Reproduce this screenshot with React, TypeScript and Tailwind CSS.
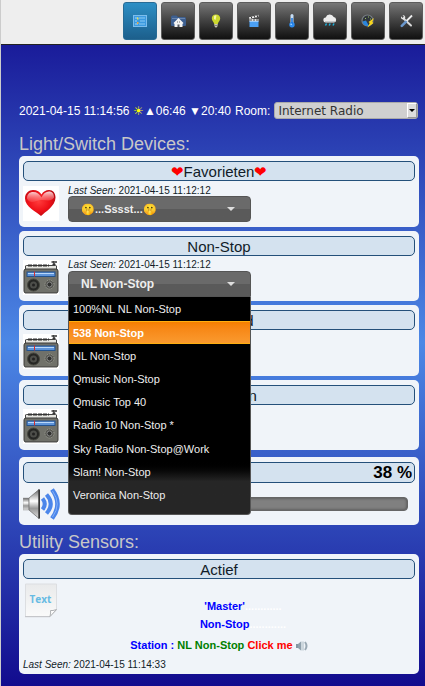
import React from 'react';

const stations = [
  '100%NL NL Non-Stop',
  '538 Non-Stop',
  'NL Non-Stop',
  'Qmusic Non-Stop',
  'Qmusic Top 40',
  'Radio 10 Non-Stop *',
  'Sky Radio Non-Stop@Work',
  'Slam! Non-Stop',
  'Veronica Non-Stop',
];

function DashboardIcon() {
  return (
    <svg width="14" height="12" viewBox="0 0 14 12">
      <rect x=".5" y=".5" width="13" height="11" fill="#3b9ae0" stroke="#7cbdec" />
      <path d="M2 3h3M2 6h2M2 9h3" stroke="#a5d6f5" />
      <path d="M6 3h6M7 6h5M6 9h6" stroke="#8ccaf2" />
      <path d="M4 2.500h1.500v2H4z" fill="#e8e05a" />
      <path d="M4 7h1.500v2H4z" fill="#e9a94a" />
    </svg>
  );
}

function HomeFolderIcon() {
  return (
    <svg width="15" height="13" viewBox="0 0 15 13">
      <path d="M0 2q0-1.500 1.500-1.500h4L7 2h6.500q1.500 0 1.500 1.500V10q0 1-1 1H1q-1 0-1-1z" fill="#3d5f90" />
      <path d="M1 3.500h13" stroke="#6985ad" />
      <path d="M7.500 3 2.500 8l1 1v3h8V9l1-1z" fill="#f4f4f4" />
      <path d="M6.500 12V9.500h2V12z" fill="#55585e" />
      <path d="M6 7h1M8 7h1" stroke="#777" />
    </svg>
  );
}

function BulbIcon() {
  return (
    <svg width="10" height="14" viewBox="0 0 10 14">
      <path d="M5 .5C2 .5.8 2.500.8 4.500c0 2.200 2 3 2.400 5.500h3.600c.4-2.500 2.400-3.300 2.400-5.500C9.200 2.500 8 .5 5 .5z" fill="#ccd82e" />
      <path d="M3 2.200q1-1 2.500-.8L4.500 6 3 5z" fill="#f5f8a5" />
      <path d="M3.300 10h3.400v2L5.500 13.500h-1L3.300 12z" fill="#c9c9b8" />
      <path d="M3.300 11.500h3.400" stroke="#66665e" strokeWidth=".7" />
    </svg>
  );
}

function SceneIcon() {
  return (
    <svg width="12" height="14" viewBox="0 0 12 14">
      <path d="M1 3.200 10.500.800v2L1.500 5z" fill="#eee" />
      <path d="m3 2.500 1 2M6 1.800l1 2M9 1l.6 2" stroke="#333" />
      <path d="M1.500 5h9v2h-9z" fill="#ddd" />
      <path d="M3 5.200v1.600M6 5.200v1.600M9 5.200v1.600" stroke="#333" />
      <path d="M1.500 7h9v6h-9z" fill="#4ba0f4" />
      <path d="M1.500 7.500h9" stroke="#9ccbfa" />
    </svg>
  );
}

function ThermometerIcon() {
  return (
    <svg width="8" height="14" viewBox="0 0 8 14">
      <path d="M4 1.500v8" stroke="#c8def5" strokeWidth="3" strokeLinecap="round" />
      <circle cx="4" cy="10.800" r="2.700" fill="#2e8df0" />
      <path d="M4 4v6" stroke="#1a74dd" strokeWidth="1.500" />
      <circle cx="3.200" cy="10.200" r=".8" fill="#b7dcff" />
    </svg>
  );
}

function RainIcon() {
  return (
    <svg width="14" height="14" viewBox="0 0 14 14">
      <path d="M3 8.500a2.500 2.500 0 0 1-.3-5A4.300 4.300 0 0 1 10.700 3 2.800 2.800 0 0 1 11 8.500z" fill="#ececec" />
      <path d="M2 7.500h10" stroke="#c2c5c8" />
      <path d="m3.500 9.500-1 2M7.200 9.500l-1 2M11 9.500l-1 2" stroke="#1db1dd" strokeWidth="1.500" />
    </svg>
  );
}

function EnergyIcon() {
  return (
    <svg width="14" height="14" viewBox="0 0 14 14">
      <circle cx="6.500" cy="6.500" r="5.500" fill="#30363c" stroke="#7b8085" strokeWidth="1.200" />
      <path d="M1.500 7.500 5 6.500l3 5.500q-5 1-6.500-4.500z" fill="#2b86dd" />
      <path d="M4 4.500h1M7 3h1M9 5h1" stroke="#9bbd60" />
      <path d="m13 4-5.500 4 1.200 1L6.500 13.500 12.500 9l-1.300-1z" fill="#f7d51d" />
    </svg>
  );
}

function ToolsIcon() {
  return (
    <svg width="13" height="14" viewBox="0 0 13 14">
      <path d="m3.500 4.500 7.500 7" stroke="#d9d9d9" strokeWidth="2" strokeLinecap="round" />
      <path d="M1 2.200q-.5 3.300 2.800 3.300 1.800-.5 1.500-2.500Q4.800 1 2.500 1l1.300 1.700L2.600 4z" fill="#e6e6e6" />
      <path d="M12 1.500 6 7.500" stroke="#eee" strokeWidth="1.800" />
      <path d="m5.800 7.800-4 4" stroke="#6a97cc" strokeWidth="2.600" strokeLinecap="round" />
    </svg>
  );
}

const navItems = [
  { label: 'Dashboard', icon: <DashboardIcon />, active: true },
  { label: 'Floorplan', icon: <HomeFolderIcon /> },
  { label: 'Switches', icon: <BulbIcon /> },
  { label: 'Scenes', icon: <SceneIcon /> },
  { label: 'Temperature', icon: <ThermometerIcon /> },
  { label: 'Weather', icon: <RainIcon /> },
  { label: 'Utility', icon: <EnergyIcon /> },
  { label: 'Setup', icon: <ToolsIcon /> },
];

function HeartPicture() {
  return (
    <svg width="36" height="35" viewBox="0 0 36 35" className="shrink-0 bg-white">
      <defs>
        <radialGradient id="heart" cx=".45" cy=".45" r=".6">
          <stop offset="0" stopColor="#ff3b3b" />
          <stop offset=".6" stopColor="#ee1018" />
          <stop offset="1" stopColor="#b80810" />
        </radialGradient>
        <linearGradient id="shine" x1="0" y1="0" x2="0" y2="1">
          <stop offset="0" stopColor="#fff" stopOpacity=".85" />
          <stop offset="1" stopColor="#ff8080" stopOpacity=".25" />
        </linearGradient>
      </defs>
      <path d="M18 30C14 26 2 21 2 12.500 2 7 6 4 10 4c4 0 7 2 8.500 4.500C20 5.500 23 4 26 4c4 0 6.500 3 6.500 7.500C32.500 20 22 26 18 30z" fill="url(#heart)" />
      <path d="M4 12.500C4 8 7 6 10 6c4 0 6.500 2 8.500 5.500C20 7.500 23 5.500 26 5.500c3 0 5 2 5 6-3 5-8 2-13 2.500S7 19 4 12.500z" fill="url(#shine)" />
    </svg>
  );
}

function RadioPicture() {
  return (
    <svg width="36" height="35" viewBox="0 0 36 35" className="shrink-0 bg-white">
      <path d="M28.500 2h2M32 2h2M31 1v6M29.500 4.500h3" stroke="#333" strokeWidth="1.500" />
      <path d="M2.500 10V6q0-.5 1-.5h29q1 0 1 .5v4" fill="#e4e4df" stroke="#444" />
      <path d="M5 5.500h21" stroke="#333" strokeWidth="2" strokeDasharray="4 1" />
      <rect x="1" y="9" width="34" height="24" rx="2" fill="#70716a" stroke="#3a3b38" />
      <path d="M2 33.500h32" stroke="#aaa" />
      <rect x="4" y="12" width="28" height="4.500" fill="#5e94da" stroke="#24538d" />
      <path d="M5 13.500h26" stroke="#b9d8fa" />
      <path d="M11.500 11.500v5" stroke="#d22b2b" />
      <circle cx="10.500" cy="25" r="6" fill="#252624" stroke="#45463f" />
      <circle cx="10.500" cy="25" r="3.500" fill="#4d4e4a" />
      <circle cx="10.500" cy="25" r="1.500" fill="#222" />
      <circle cx="26.500" cy="24.500" r="4.500" fill="#555650" stroke="#a5a69d" strokeDasharray="1 1" />
      <circle cx="26.500" cy="24.500" r="2.500" fill="#30312f" stroke="#888" />
    </svg>
  );
}

function SpeakerPicture() {
  return (
    <svg width="37" height="34" viewBox="0 0 37 34" className="shrink-0">
      <defs>
        <linearGradient id="cone" x1="0" y1="0" x2="0" y2="1">
          <stop offset="0" stopColor="#666" />
          <stop offset=".4" stopColor="#fff" />
          <stop offset=".65" stopColor="#999" />
          <stop offset="1" stopColor="#ddd" />
        </linearGradient>
      </defs>
      <path d="M0 11h6v12H0z" fill="url(#cone)" stroke="#999" strokeWidth=".5" />
      <path d="M6 11 16 2.500v29L6 23z" fill="url(#cone)" stroke="#666" strokeWidth=".7" />
      <path d="M16.200 2.500v29" stroke="#333" strokeWidth="1.600" />
      <g fill="none" stroke="#4b86ea">
        <path d="M19.500 11.500q4.500 5.500 0 11" strokeWidth="4" />
        <path d="M23.500 7.500q8.500 9.500 0 19" strokeWidth="4" />
        <path d="M29 2.500q11 14.500 0 29" strokeWidth="4.500" />
      </g>
      <path d="M29.500 4q9.500 13 0 26" fill="none" stroke="#83aff7" strokeWidth="1" />
    </svg>
  );
}

function TextPicture() {
  return (
    <svg width="36" height="35" viewBox="0 0 36 35" className="shrink-0">
      <defs>
        <linearGradient id="paper" x1="0" y1="0" x2="0" y2="1">
          <stop offset="0" stopColor="#e9eaeb" />
          <stop offset="1" stopColor="#fafafa" />
        </linearGradient>
      </defs>
      <path d="M2.500 1h31v26L27 33.500H2.500z" fill="url(#paper)" stroke="#dcdee1" />
      <path d="M2 33.700h25" stroke="#bfc1c4" />
      <path d="M33.500 26.500 27 33.500q1-4 .5-6 2 .5 6-1z" fill="#fff" stroke="#b0b2b5" />
      <text x="17.500" y="20" textAnchor="middle" fontSize="10" fontWeight="bold" fontFamily="Open Sans, sans-serif" fill="#67bbe3">Text</text>
    </svg>
  );
}

function LoudspeakerIcon() {
  return (
    <svg width="12" height="10" viewBox="0 0 12 10" className="inline-block align-middle">
      <path d="M0 3h2v4H0z" fill="#8396a3" />
      <path d="M2 3 5 .5v9L2 7z" fill="#8fa0ac" />
      <path d="M5 .5h3v9H5z" fill="#ccd6dd" />
      <path d="M9 1q3 4 0 8" fill="none" stroke="#9aa9b4" strokeWidth="2" />
    </svg>
  );
}

function Title({ children }: { children?: React.ReactNode }) {
  return (
    <h3 className="h-5 rounded-[5px] border border-[#24507a] bg-[#d4e2ef] text-center text-[15px] leading-5 text-[#111c28]">
      {children}
    </h3>
  );
}

function Card({ children, className = '' }: { children: React.ReactNode; className?: string }) {
  return <section className={'rounded-[5px] bg-[#f0f4f9] px-1 pt-[5px] ' + className}>{children}</section>;
}

function LastSeen({ time }: { time: string }) {
  return (
    <p className="text-[10px] leading-[10px] whitespace-nowrap text-[#111c28]">
      <i>Last Seen:</i> {time}
    </p>
  );
}

const selector =
  'block h-[26px] w-full appearance-none rounded-t-[4px] border border-[#555] bg-linear-to-b from-[#6a6a6a] from-50% to-[#5a5a5a] to-50% pl-3 text-left font-bold text-[#eee]';

function Caret() {
  return (
    <span className="pointer-events-none absolute top-[11px] right-4 border-x-4 border-t-4 border-x-transparent border-t-[#ddd]" />
  );
}

export default function App() {
  return (
    <div className="min-h-screen border-l border-[#ccc] bg-linear-to-b/srgb from-[#120b8e] via-[#4c88e6] to-[#120b8e] pb-3 font-['Liberation_Sans',Arial,sans-serif]">
      <nav className="flex h-[45px] justify-end gap-1 border-b border-[#222] bg-[#eee] pt-[2px] pr-[2px]">
        {navItems.map((n) => (
          <button
            key={n.label}
            aria-label={n.label}
            className={
              'flex h-[38px] w-[34px] items-center justify-center rounded-[3px] border ' +
              (n.active
                ? 'border-[#286b95] bg-linear-to-b from-[#2d8fc5] to-[#1c5f8c]'
                : 'border-[#5c5c5c] bg-linear-to-b from-[#777] to-[#111]')
            }
          >
            {n.icon}
          </button>
        ))}
      </nav>

      <main className="pt-14 pr-[6px] pl-[18px]">
        <div className="flex h-[19px] items-center justify-between gap-1 pr-px text-[12px] whitespace-nowrap text-white">
          <span>
            2021-04-15 11:14:56 <span className="text-[#ff0]">☀</span>▲06:46 ▼20:40
          </span>
          <label htmlFor="room">Room:</label>
          <div className="relative flex w-36 min-w-0">
            <select
              id="room"
              className="h-[17px] w-full appearance-none rounded-[3px] border border-[#aaa] bg-[#d0d0d0] pt-px pl-[3px] font-['DejaVu_Sans',sans-serif] text-[12px] leading-[15px] text-[#333]"
            >
              <option>Internet Radio</option>
            </select>
            <span className="pointer-events-none absolute inset-y-px right-px flex w-[10px] items-center justify-center border border-[#999] border-t-white border-l-white bg-[#ddd]">
              <span className="border-x-[3px] border-t-[3px] border-x-transparent border-t-black" />
            </span>
          </div>
        </div>

        <h2 className="mt-[13px] mb-px text-[18px] leading-[22px] text-[#c8c8c8]">Light/Switch Devices:</h2>

        <div className="flex flex-col gap-1">
          <Card className="h-[71px]">
            <Title>
              <span className="text-[#f00]">❤</span>Favorieten<span className="text-[#f00]">❤</span>
            </Title>
            <div className="flex gap-[9px] pt-[5px]">
              <HeartPicture />
              <div>
                <LastSeen time="2021-04-15 11:12:12" />
                <div className="relative w-[183px]">
                  <select aria-label="Favorieten" className={selector + ' rounded-b-[4px] text-[11px]'}>
                    <option>🤫...Sssst...🤫</option>
                  </select>
                  <Caret />
                </div>
              </div>
            </div>
          </Card>

          <Card className="h-[70px]">
            <Title>Non-Stop</Title>
            <div className="flex gap-[9px] pt-[4px]">
              <RadioPicture />
              <div>
                <LastSeen time="2021-04-15 11:12:12" />
                <div className="relative z-10 mt-px w-[183px]">
                  <button aria-haspopup="listbox" aria-expanded="true" className={selector + ' text-[12px]'}>
                    NL Non-Stop
                  </button>
                  <Caret />
                  <ul
                    role="listbox"
                    aria-label="Non-Stop"
                    className="absolute inset-x-0 top-full grid h-[218px] auto-rows-fr rounded-b-[4px] border border-t-0 border-[#555] bg-linear-to-b from-black from-75% to-[#262626] to-85% pt-px pb-[7px] text-[11px] text-[#eee]"
                  >
                    {stations.map((s, i) => (
                      <li
                        key={s}
                        role="option"
                        aria-selected={i === 1}
                        className={
                          'flex items-center border-y px-1 ' +
                          (i === 1
                            ? 'border-[#ffaf0f] bg-linear-to-b from-[#f57f00] to-[#fa9a2e] font-bold text-white'
                            : 'border-transparent')
                        }
                      >
                        {s}
                      </li>
                    ))}
                  </ul>
                </div>
              </div>
            </div>
          </Card>

          <Card className="h-[71px]">
            <Title>Nederland</Title>
            <div className="pt-[4px]">
              <RadioPicture />
            </div>
          </Card>

          <Card className="h-[70px]">
            <Title>Instellingen</Title>
            <div className="pt-[4px]">
              <RadioPicture />
            </div>
          </Card>

          <Card className="mt-[3px] h-[68px]">
            <h3 className="h-[21px] rounded-[5px] border border-[#24507a] bg-[#d4e2ef] pr-[2px] text-right text-[17px] leading-5 font-bold text-black">
              38 %
            </h3>
            <div className="flex items-center gap-[9px] pt-[4px] pr-[7px]">
              <SpeakerPicture />
              <input
                type="range"
                aria-label="Volume"
                defaultValue={38}
                className="h-[14px] min-w-0 flex-1 appearance-none rounded-[4px] border border-[#666] bg-[#808080] shadow-[inset_0_0_3px_#444]"
              />
            </div>
          </Card>
        </div>

        <h2 className="mt-[6px] mb-px text-[18px] leading-[22px] text-[#c8c8c8]">Utility Sensors:</h2>

        <Card className="h-[120px]">
          <Title>Actief</Title>
          <div className="pt-[4px]">
            <TextPicture />
          </div>
          <div className="-mt-[21px] text-center text-[11px] leading-[18px] font-bold text-[#00f]">
            <p className="pl-12">
              'Master'<span className="text-white">............</span>
            </p>
            <p className="pl-12">
              Non-Stop<span className="text-white">............</span>
            </p>
            <p className="mt-[3px]">
              Station : <span className="text-[#008000]">NL Non-Stop</span>{' '}
              <a href="#listen" className="text-[#f00]">
                Click me <LoudspeakerIcon />
              </a>
            </p>
          </div>
          <div className="pt-[6px]">
            <LastSeen time="2021-04-15 11:14:33" />
          </div>
        </Card>
      </main>
    </div>
  );
}
